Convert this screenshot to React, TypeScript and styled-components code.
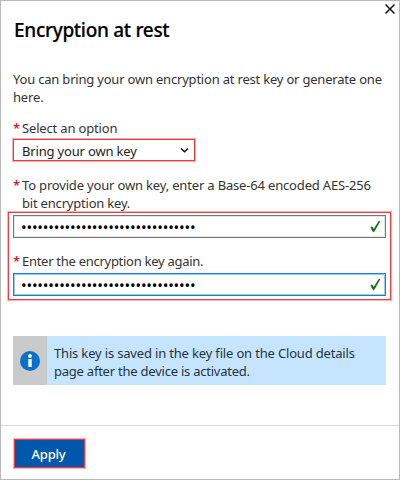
import React from "react";
import styled, { createGlobalStyle } from "styled-components";

const GlobalStyle = createGlobalStyle`
  * { box-sizing: border-box; }
  body { margin: 0; background: #fff; }
`;

const Dialog = styled.main`
  width: 400px;
  height: 480px;
  border: 1px solid #b9b9b9;
  background: #fff;
  display: flex;
  flex-direction: column;
  overflow: hidden;
  font-family: "Noto Sans", "Open Sans", sans-serif;
  font-size: 13px;
  line-height: 18px;
  color: #333;
`;

const Header = styled.header`
  display: flex;
  justify-content: space-between;
  align-items: flex-start;
  height: 69px;
  padding: 2px 3px 0 13px;
`;

const Title = styled.h1`
  margin: 14px 0 0;
  font-size: 19px;
  line-height: 27px;
  font-weight: 500;
  letter-spacing: -0.3px;
  color: #000;
  -webkit-text-stroke: 0.2px #000;
  white-space: nowrap;
`;

const CloseButton = styled.button`
  width: 12px;
  height: 12px;
  padding: 0;
  border: 0;
  background: none;
  display: flex;
`;

const Line = styled.span<{ $spacing?: number }>`
  display: block;
  white-space: nowrap;
  letter-spacing: ${(p) => p.$spacing ?? -0.17}px;
`;

const Bullets = styled.span`
  font-size: 15px;
  letter-spacing: -0.19px;
  white-space: nowrap;
`;

const Body = styled.section`
  display: flex;
  flex-direction: column;
  align-items: flex-start;
  height: 355px;
  padding-left: 12px;
`;

const Intro = styled.div`
  margin-bottom: 13px;
`;

const Label = styled.label`
  display: grid;
  grid-template-columns: 9px auto;
`;

const Required = styled.span`
  color: #e81123;
  font-weight: 600;
`;

const Select = styled.div`
  width: 182px;
  height: 22px;
  margin: 2px 0 15px;
  padding: 2px 5px 0 8px;
  border: 1px solid #f13438;
  box-shadow: 0 0 0 1px #f1343860;
  display: flex;
  justify-content: space-between;
  align-items: center;
  color: #222;

  svg {
    margin-bottom: 2px;
  }
`;

const Highlight = styled.div`
  width: 383px;
  height: 88px;
  margin: 0 0 0 -5px;
  padding: 2px 4px;
  border: 1px solid #f8383c;
  box-shadow: 0 0 0 1px #f8383c60;
  display: flex;
  flex-direction: column;
`;

const KeyField = styled.div<{ $focused?: boolean }>`
  height: 23px;
  padding: 0 4px 0 7px;
  border: 1px solid ${(p) => (p.$focused ? "#1583d8" : "#777")};
  box-shadow: inset 0 0 0 1px ${(p) => (p.$focused ? "#1583d870" : "#77777730")};
  display: flex;
  justify-content: space-between;
  align-items: center;
  color: #000;
`;

const ConfirmLabel = styled(Label)`
  margin: 14px 0 3px;
`;

const Notice = styled.aside`
  width: 373px;
  height: 49px;
  margin-top: 36px;
  display: flex;
  background: #c5e5ff;
  color: #27333c;
`;

const NoticeIcon = styled.div`
  width: 34px;
  display: flex;
  align-items: center;
  justify-content: center;
  background: #cacaca;
`;

const NoticeText = styled.div`
  padding: 8px 0 0 7px;
`;

const Footer = styled.footer`
  flex: 1;
  border-top: 1px solid #d7d7d7;
  padding: 13px 0 0 13px;
`;

const ApplyButton = styled.button`
  width: 71px;
  height: 29px;
  padding: 0 2px 0 0;
  border: 1px solid #f8383c;
  box-shadow: 0 0 0 1px #f8383c60;
  background: #0058ad;
  color: #fff;
  font: inherit;
  font-weight: 500;
  display: flex;
  align-items: center;
  justify-content: center;
`;

const BULLETS = "•".repeat(32);

const Check = () => (
  <svg width="11" height="13" viewBox="0 0 11 13" fill="none">
    <path d="M.8 7.6 2 6.8l1.8 2.5L9 1l1 .3-6 10.5H3.1Z" fill="#0d6c12" stroke="#0d6c12" strokeWidth=".6" />
  </svg>
);

export default function App() {
  return (
    <>
      <GlobalStyle />
      <Dialog>
        <Header>
          <Title>Encryption at rest</Title>
          <CloseButton aria-label="Close">
            <svg width="12" height="12" viewBox="0 0 12 12">
              <path d="m1.5 1.5 9 9m0-9-9 9" stroke="#111" strokeWidth="1.5" />
            </svg>
          </CloseButton>
        </Header>
        <Body>
          <Intro>
            <Line $spacing={-0.2}>You can bring your own encryption at rest key or generate one</Line>
            <Line>here.</Line>
          </Intro>
          <Label>
            <Required>*</Required>
            <Line>Select an option</Line>
          </Label>
          <Select>
            <Line>Bring your own key</Line>
            <svg width="9" height="7" viewBox="0 0 9 7" fill="none">
              <path d="m1 1.5 3.5 3.3L8 1.5" stroke="#111" strokeWidth="1.5" />
            </svg>
          </Select>
          <Label>
            <Required>*</Required>
            <div>
              <Line>To provide your own key, enter a Base-64 encoded AES-256</Line>
              <Line $spacing={-0.2}>bit encryption key.</Line>
            </div>
          </Label>
          <Highlight>
            <KeyField>
              <Bullets>{BULLETS}</Bullets>
              <Check />
            </KeyField>
            <ConfirmLabel>
              <Required>*</Required>
              <Line $spacing={-0.28}>Enter the encryption key again.</Line>
            </ConfirmLabel>
            <KeyField $focused>
              <Bullets>{BULLETS}</Bullets>
              <Check />
            </KeyField>
          </Highlight>
          <Notice>
            <NoticeIcon>
              <svg width="20" height="20" viewBox="0 0 20 20">
                <circle cx="10" cy="10" r="10" fill="#0872ca" />
                <circle cx="10" cy="5" r="1.9" fill="#fff" />
                <path d="M8.3 8h3.4v8H8.3Z" fill="#fff" />
              </svg>
            </NoticeIcon>
            <NoticeText>
              <Line>This key is saved in the key file on the Cloud details</Line>
              <Line $spacing={-0.23}>page after the device is activated.</Line>
            </NoticeText>
          </Notice>
        </Body>
        <Footer>
          <ApplyButton>
            <Line>Apply</Line>
          </ApplyButton>
        </Footer>
      </Dialog>
    </>
  );
}
